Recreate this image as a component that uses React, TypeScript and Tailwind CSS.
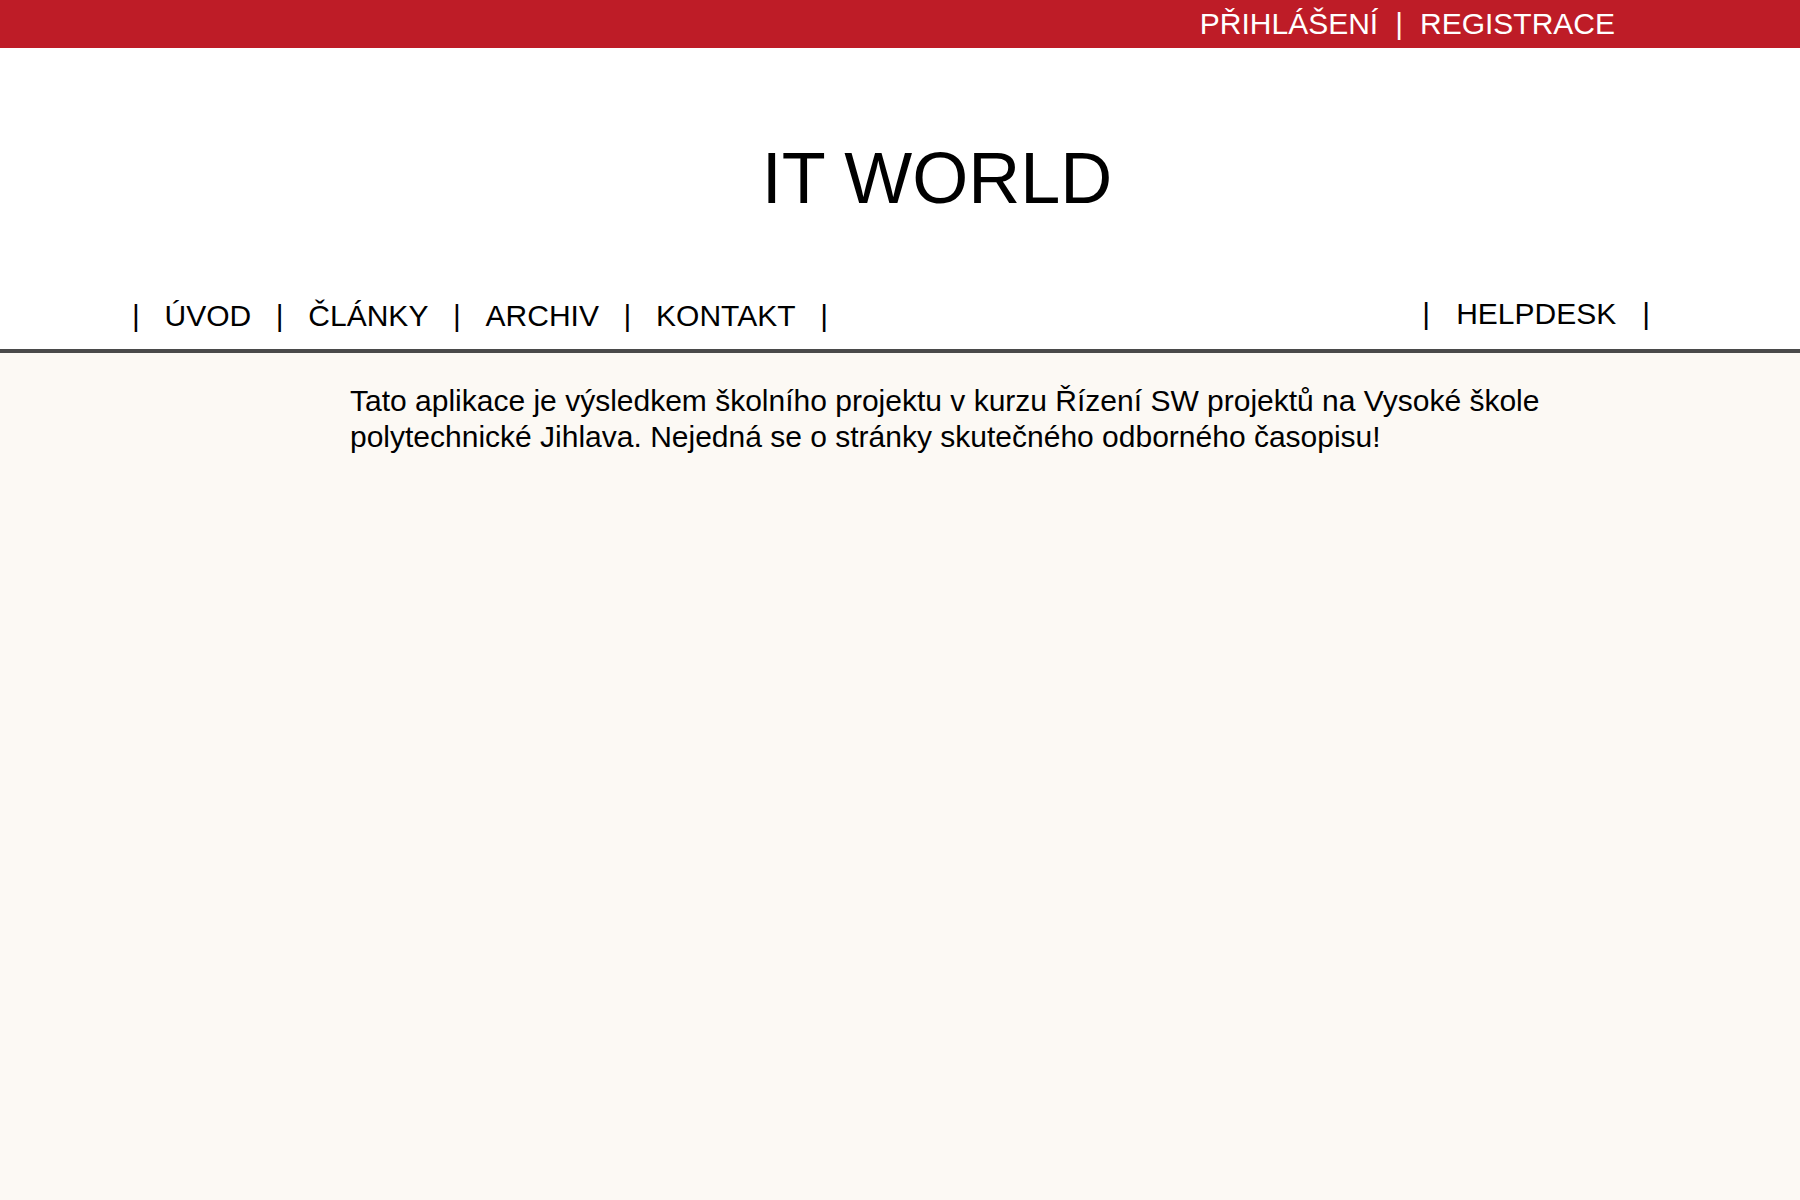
export default function App() {
  const font = { fontFamily: '"Liberation Sans", Arial, sans-serif' };
  return (
    <div className="min-h-[1200px] bg-[#fcf9f4] text-black" style={font}>
      <div className="h-[48px] bg-[#be1c27] flex items-center justify-end pr-[185px] pb-[2px] text-white text-[30px]">
        <a>PŘIHLÁŠENÍ</a>
        <span className="ml-[17px] mr-[17px]">|</span>
        <a>REGISTRACE</a>
      </div>
      <header className="bg-white">
        <div className="pt-[94px] pl-[74px] text-center">
          <h1 className="text-[72px] leading-none font-normal">IT WORLD</h1>
        </div>
        <nav className="mt-[87px] pb-[18px] pl-[132px] pr-[150px] flex justify-between text-[30px] leading-[30px]">
          <div className="flex gap-[24.7px]">
            <span>|</span>
            <a>ÚVOD</a>
            <span>|</span>
            <a>ČLÁNKY</a>
            <span>|</span>
            <a>ARCHIV</a>
            <span>|</span>
            <a>KONTAKT</a>
            <span>|</span>
          </div>
          <div className="flex gap-[26px] -mt-[2px]">
            <span>|</span>
            <a>HELPDESK</a>
            <span>|</span>
          </div>
        </nav>
      </header>
      <div className="border-t-4 border-[#4a4a4a]" />
      <p className="mt-[30px] ml-[350px] w-[1280px] text-[30px] leading-[36px]">
        Tato aplikace je výsledkem školního projektu v kurzu Řízení SW projektů na Vysoké škole polytechnické Jihlava. Nejedná se o stránky skutečného odborného časopisu!
      </p>
    </div>
  );
}
